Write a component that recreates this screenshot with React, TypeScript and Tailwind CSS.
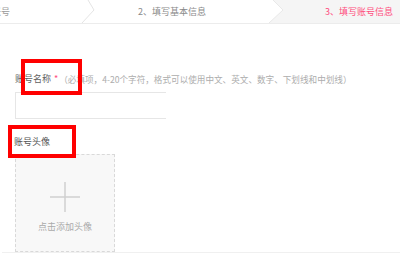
import React from "react";

export default function App() {
  return (
    <div
      className="relative w-[400px] h-[257px] bg-white overflow-hidden"
      style={{ fontFamily: '"Noto Sans CJK SC", "Noto Sans", sans-serif' }}
    >
      {/* step bar */}
      <div className="relative flex h-[24px] border-b border-[#ececec] text-[9px] leading-[12px]">
        <div className="w-[88px] flex items-center">
          <span className="ml-[-8px] text-[#9a9a9a]">账号</span>
        </div>
        <div className="w-[181px] flex items-center pl-[50px]">
          <span className="text-[#8a8a8a]">2、填写基本信息</span>
        </div>
        <div className="flex-1 bg-[#f5f5f5] flex items-center pl-[56px]">
          <span className="text-[#ff4d7d]">3、填写账号信息</span>
        </div>
        <svg
          className="absolute left-0 top-0"
          width="400"
          height="23"
          viewBox="0 0 400 23"
        >
          <polyline points="88,0 94,10 82,23" fill="none" stroke="#e4e4e4" strokeWidth="1" />
          <polygon points="268,0 273,0 283,10 269,23 268,23" fill="#ffffff" />
          <polyline points="273,0 283,10 269,23" fill="none" stroke="#e8e8e8" strokeWidth="1" />
        </svg>
      </div>

      {/* form */}
      <div className="pl-[15px] pt-[49px] text-[9px] leading-[12px]">
        <div className="flex items-center whitespace-nowrap">
          <span className="text-[#5f5f5f]">账号名称</span>
          <span className="text-[#ff4d7d] ml-[3px]">*</span>
          <span className="text-[#adadad] ml-[1px] text-[8.6px]">
            （必填项，4-20个字符，格式可以使用中文、英文、数字、下划线和中划线）
          </span>
        </div>
        <div className="mt-[7px] w-[151px] h-[27px] border border-r-0 border-[#e6e6e6]" />

        <div className="mt-[17px] text-[#555] ml-[-1px]">账号头像</div>

        <div className="mt-[6px] w-[100px] h-[98px] border border-dashed border-[#d9d9d9] bg-[#f8f8f8] flex flex-col items-center">
          <svg className="mt-[27px]" width="30" height="30" viewBox="0 0 30 30">
            <rect x="14.25" y="0" width="1.5" height="30" fill="#cfcfcf" />
            <rect x="0" y="14.25" width="30" height="1.5" fill="#cfcfcf" />
          </svg>
          <span className="mt-[9px] text-[#aaa]">点击添加头像</span>
        </div>
      </div>
      <div className="ml-[2px] border-t border-[#f0f0f0]" />

      {/* red annotation boxes */}
      <div className="absolute left-[21px] top-[59px] w-[61px] h-[36px] border-[4px] border-[#ff0000]" />
      <div className="absolute left-[8px] top-[125px] w-[68px] h-[33px] border-[4px] border-[#ff0000]" />
    </div>
  );
}
